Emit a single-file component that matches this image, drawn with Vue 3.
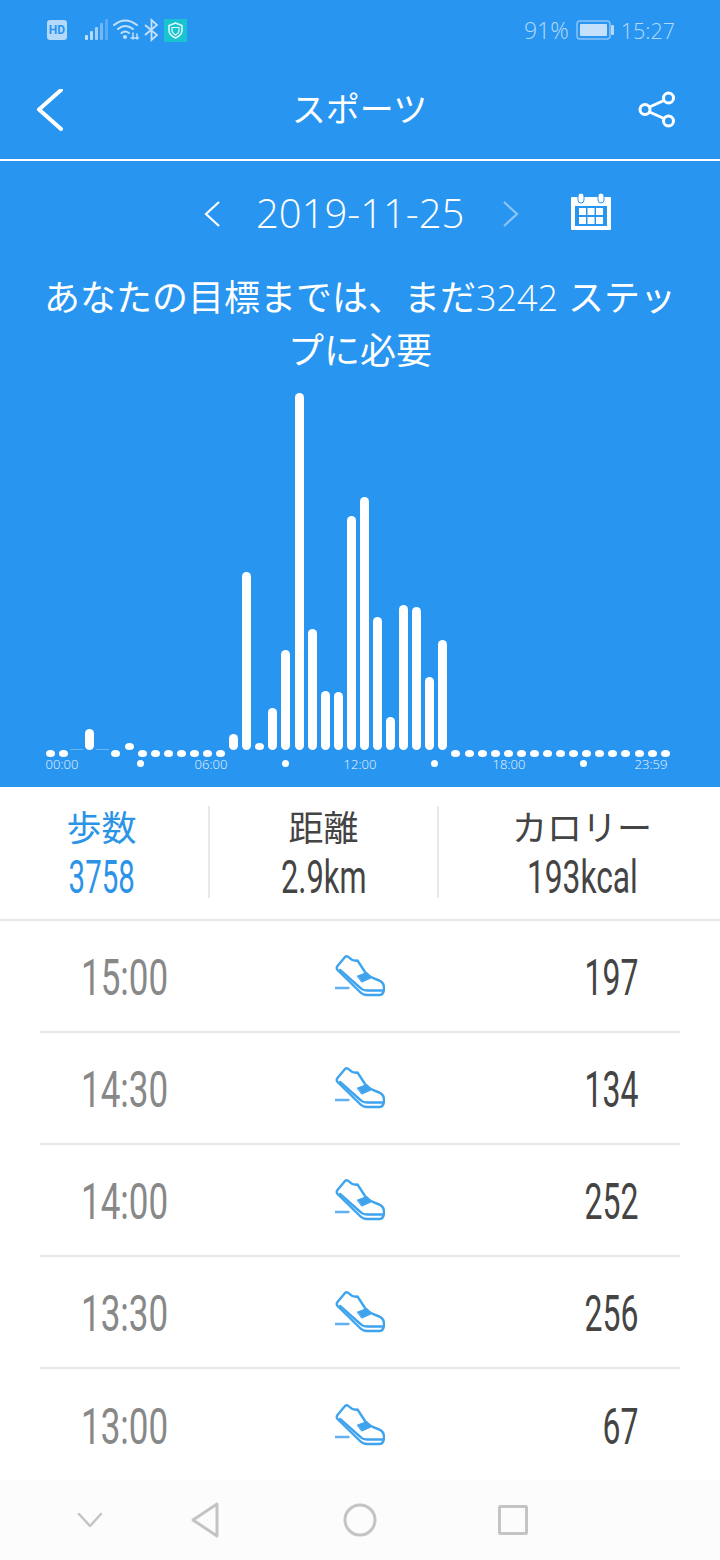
<script setup>
const tops = { 3: 729, 14: 734, 15: 572, 17: 708, 18: 650, 19: 393, 20: 629, 21: 691, 22: 692, 23: 516, 24: 497, 25: 617, 26: 717, 27: 605, 28: 607, 29: 677, 30: 640 }
const slots = Array.from({ length: 48 }, (_, i) => {
  if (tops[i]) return { type: 'bar', h: 750 - tops[i] }
  if (i === 2 || i === 4) return { type: 'line', h: 1 }
  if (i === 6 || i === 16) return { type: 'raised', h: 7 }
  return { type: 'dot', h: 7 }
})
const labels = [
  { t: '00:00', x: 62 }, { t: '06:00', x: 211 }, { t: '12:00', x: 360 }, { t: '18:00', x: 509 }, { t: '23:59', x: 651 }
]
const ticks = [140, 285, 434, 583]
const rows = [
  { t: '15:00', v: 197 }, { t: '14:30', v: 134 }, { t: '14:00', v: 252 }, { t: '13:30', v: 256 }, { t: '13:00', v: 67 }
]
</script>

<template>
  <div class="page">
    <section class="hero">
      <div class="status">
        <div class="st-left">
          <span class="hd">HD</span>
          <svg class="sig" width="24" height="22" viewBox="0 0 24 22">
            <rect x="0" y="16" width="3" height="5" rx="1" fill="#c4e0fa" />
            <rect x="5" y="12" width="3" height="9" rx="1" fill="#b5d9f9" />
            <rect x="10" y="8" width="3" height="13" rx="1" fill="#a2cff7" />
            <rect x="15" y="4" width="3" height="17" rx="1" fill="#74b8f5" />
            <rect x="20" y="0" width="3" height="21" rx="1" fill="#5aabf3" />
          </svg>
          <svg class="wifi" width="26" height="24" viewBox="0 0 26 24" fill="none" stroke="#c4e0fa" stroke-width="2" stroke-linecap="round">
            <path d="M1 7Q12 -2 24 7" />
            <path d="M5 11Q12 5 20 11" />
            <path d="M8.500 15Q12 12 16 15" />
            <circle cx="12" cy="19" r="2" fill="#c4e0fa" stroke="none" />
            <path d="M20 15V21M24 16V21M18 20H26" stroke-width="1.500" />
          </svg>
          <svg class="bt" width="15" height="24" viewBox="0 0 15 24" fill="none" stroke="#c4e0fa" stroke-width="1.800">
            <path d="M1 7L13 17L7.500 22V2L13 7L1 17" />
          </svg>
          <svg class="shield" width="23" height="23" viewBox="0 0 23 23">
            <rect width="23" height="23" fill="#19c3cf" />
            <path d="M11.500 4L18 6.500V11.500Q18 16 11.500 19Q5 16 5 11.500V6.500Z" fill="none" stroke="#e6fbfc" stroke-width="1.500" />
            <path d="M8 8.500H15V11.500Q15 14 11.500 16Q8 14 8 11.500Z" fill="none" stroke="#e6fbfc" stroke-width="1.100" />
          </svg>
        </div>
        <div class="st-right">
          <span class="pct">91%</span>
          <svg class="batt" width="38" height="20" viewBox="0 0 38 20">
            <rect x="1" y="1" width="33" height="18" rx="3" fill="none" stroke="#8cc4f6" stroke-width="1.500" />
            <rect x="4" y="4" width="27" height="12" rx="1" fill="#c4e0fa" />
            <rect x="35" y="5" width="3" height="10" rx="1" fill="#b5d9f9" />
          </svg>
          <span class="clock">15:27</span>
        </div>
      </div>

      <header class="nav">
        <svg class="back" width="30" height="42" viewBox="0 0 30 42" fill="none" stroke="#fff" stroke-width="4" stroke-linecap="round" stroke-linejoin="round">
          <path d="M26 1L4 20.500L26 40" />
        </svg>
        <h1 class="title">スポーツ</h1>
        <svg class="share" width="38" height="38" viewBox="0 0 38 38" fill="none" stroke="#fff" stroke-width="3">
          <circle cx="7" cy="18.500" r="5" />
          <circle cx="30.500" cy="7" r="5" />
          <circle cx="30.500" cy="30" r="5" />
          <path d="M11.500 16L26 9.500M11.500 21L26 27.500" />
        </svg>
      </header>

      <div class="date-row">
        <svg width="17" height="28" viewBox="0 0 17 28" fill="none" stroke="#fff" stroke-width="2.200"><path d="M15 2L2 14L15 26" /></svg>
        <span class="date">2019-11-25</span>
        <svg class="next" width="17" height="28" viewBox="0 0 17 28" fill="none" stroke="#8cc4f6" stroke-width="2.200"><path d="M2 2L15 14L2 26" /></svg>
        <svg class="cal" width="40" height="37" viewBox="0 0 40 37">
          <rect x="0" y="4" width="40" height="33" rx="1" fill="#fff" />
          <rect x="4" y="13" width="32" height="20" fill="#2895f1" />
          <rect x="7" y="0" width="6" height="10" rx="3" fill="#fff" stroke="#2895f1" stroke-width="1" />
          <rect x="27" y="0" width="6" height="10" rx="3" fill="#fff" stroke="#2895f1" stroke-width="1" />
          <g fill="#fff">
            <rect x="8" y="15" width="7" height="7" /><rect x="16.500" y="15" width="7" height="7" /><rect x="25" y="15" width="7" height="7" />
            <rect x="8" y="24" width="7" height="7" /><rect x="16.500" y="24" width="7" height="7" /><rect x="25" y="24" width="7" height="7" />
          </g>
        </svg>
      </div>

      <p class="msg"><span>あなたの目標までは、まだ</span><span class="num">3242</span><span class="tail">ステッ</span><br /><span>プに必要</span></p>

      <div class="chart">
        <div class="bars">
          <div v-for="(s, i) in slots" :key="i" class="slot">
            <div :class="['b', s.type]" :style="{ height: s.h + 'px' }"></div>
          </div>
        </div>
        <span v-for="x in ticks" :key="x" class="tick" :style="{ left: x - 3.5 + 'px' }"></span>
        <span v-for="l in labels" :key="l.t" class="lab" :style="{ left: l.x - 30 + 'px' }">{{ l.t }}</span>
      </div>
    </section>

    <section class="stats">
      <div class="col c1 active">
        <span class="s-label">歩数</span>
        <span class="s-val"><span class="cond">3758</span></span>
      </div>
      <div class="col c2">
        <span class="s-label">距離</span>
        <span class="s-val"><span class="cond mid">2.9km</span></span>
      </div>
      <div class="col c3">
        <span class="s-label">カロリー</span>
        <span class="s-val"><span class="cond wide">193kcal</span></span>
      </div>
    </section>

    <section class="list">
      <div v-for="r in rows" :key="r.t" class="row">
        <span class="time">{{ r.t }}</span>
        <svg class="shoe" width="50" height="42" viewBox="0 0 50 42" fill="none" stroke="#3fa3ee" stroke-width="2.400" stroke-linejoin="round" stroke-linecap="round">
          <path d="M2.500 11L10 2Q12 0.500 14 2.500Q18 6.500 22.500 5.500L30 17Q34 22 43 25Q49 27 49 33Q49 40 44 40H32Q28 40 25 37L2.500 15Q1 13 2.500 11Z" />
          <path d="M5 15L26 33.500Q28 35.500 32 35.500H48" />
          <path d="M22.500 21L32 17.500L36 23L27 27Z" fill="#3fa3ee" stroke-width="1" />
          <path d="M0.500 33H13.500" stroke="#62b0ee" />
        </svg>
        <span class="val">{{ r.v }}</span>
      </div>
    </section>

    <footer class="sysnav">
      <svg class="s-chev" width="26" height="16" viewBox="0 0 26 16" fill="none" stroke="#c4c4c4" stroke-width="2.500" stroke-linecap="round" stroke-linejoin="round"><path d="M2 2L13 14L24 2" /></svg>
      <svg class="s-tri" width="30" height="36" viewBox="0 0 30 36" fill="none" stroke="#c4c4c4" stroke-width="3" stroke-linejoin="round"><path d="M27 2V34L3 18Z" /></svg>
      <svg class="s-cir" width="34" height="34" viewBox="0 0 34 34" fill="none" stroke="#c4c4c4" stroke-width="3"><circle cx="17" cy="17" r="15" /></svg>
      <svg class="s-sq" width="30" height="30" viewBox="0 0 30 30" fill="none" stroke="#c4c4c4" stroke-width="3" stroke-linejoin="round"><rect x="1.500" y="1.500" width="27" height="27" rx="1" /></svg>
    </footer>
  </div>
</template>

<style>
html, body { margin: 0; background: #fff; }
</style>

<style scoped>
.page {
  width: 720px;
  height: 1560px;
  display: flex;
  flex-direction: column;
  overflow: hidden;
  background: #fff;
  font-family: "Open Sans", "Noto Sans CJK JP", sans-serif;
}
.hero { height: 787px; background: #2895f1; color: #fff; display: flex; flex-direction: column; flex: none; }
.status { height: 60px; display: flex; justify-content: space-between; align-items: center; padding: 0 45px 0 47px; }
.st-left, .st-right { display: flex; align-items: center; }
.hd {
  width: 20px; height: 20px; border-radius: 3px; background: #b5d9f9; color: #2895f1;
  font: 700 12px/20px "Roboto", sans-serif; text-align: center;
}
.sig { margin-left: 18px; }
.wifi { margin-left: 4px; }
.bt { margin-left: 5px; }
.shield { margin-left: 5px; }
.pct, .clock { font-weight: 300; color: #b5d9f9; }
.pct { font-size: 23px; }
.clock { font-size: 21.500px; margin-left: 7px; }
.batt { margin-left: 7px; }
.nav {
  height: 99px; flex: none; display: grid; grid-template-columns: 1fr auto 1fr; align-items: center;
  padding: 0 44px 0 35px; border-bottom: 2px solid #fff;
}
.share { justify-self: end; }
.title { margin: 0; font-size: 34px; font-weight: 400; line-height: 1; position: relative; top: -1px; left: 4px; }
.date-row { height: 105px; display: flex; align-items: center; padding-left: 204px; flex: none; }
.date { font-size: 40px; font-weight: 300; margin-left: 35px; line-height: 1; position: relative; top: -1px; }
.next { margin-left: 38px; }
.cal { margin-left: 52px; position: relative; top: -2px; }
.msg { margin: 5px 0 0; padding: 0 40px; height: 106px; font-size: 36px; line-height: 53px; text-align: center; flex: none; }
.num { font-weight: 300; }
.tail { margin-left: 10px; }
.chart { position: relative; flex: 1; }
.bars {
  position: absolute; left: 44px; bottom: 37px; display: flex; align-items: flex-end;
}
.slot { width: 13.085px; display: flex; justify-content: center; align-items: flex-end; }
.b { width: 9px; background: #fff; flex: none; }
.bar { border-radius: 4.500px; }
.dot { border-radius: 50%; margin-bottom: -7px; }
.raised { border-radius: 50%; }
.line { width: 13.100px; background: rgba(255, 255, 255, .3); }
.tick { position: absolute; top: 382.500px; width: 7px; height: 7px; border-radius: 50%; background: #fff; }
.lab {
  position: absolute; top: 378px; width: 60px; text-align: center; font-size: 13px; font-weight: 300; line-height: 18px;
  color: #eef6fe;
}
.stats { height: 134px; flex: none; display: flex; align-items: center; border-bottom: 2px solid #e8e8e8; box-sizing: border-box; }
.col {
  height: 92px; display: flex; flex-direction: column; align-items: center; box-sizing: border-box; color: #444;
  position: relative; top: -1px;
}
.c1 { width: 210px; border-right: 2px solid #e8e8e8; padding-right: 5px; }
.c2 { width: 229px; border-right: 2px solid #e8e8e8; }
.c3 { width: 281px; padding-left: 5px; }
.active { color: #2b94e6; }
.s-label { font-size: 35px; line-height: 44px; height: 44px; }
.s-val { font-family: "Roboto", sans-serif; font-size: 46px; line-height: 48px; height: 48px; position: relative; top: 3px; }
.cond { display: inline-block; transform: scaleX(.64); }
.mid { transform: scaleX(.67); }
.wide { transform: scaleX(.69); }
.list { flex: 1; padding: 0 40px; overflow: hidden; }
.row {
  height: 112px; box-sizing: border-box; border-bottom: 2px solid #e8e8e8;
  display: grid; grid-template-columns: 1fr auto 1fr; align-items: center;
  font-family: "Roboto", sans-serif; font-size: 50px; padding: 0 42px 0 41px;
}
.row:last-child { border-bottom: 0; }
.time { color: #888; display: inline-block; transform: scaleX(.7) translateY(2px); transform-origin: left center; }
.val { color: #444; text-align: right; transform: scaleX(.64) translateY(2px); transform-origin: right center; }
.sysnav { height: 80px; flex: none; background: #fcfcfc; position: relative; }
.sysnav svg { position: absolute; }
.s-chev { left: 77px; top: 32px; }
.s-tri { left: 190px; top: 22px; }
.s-cir { left: 343px; top: 23px; }
.s-sq { left: 498px; top: 25px; }
</style>
